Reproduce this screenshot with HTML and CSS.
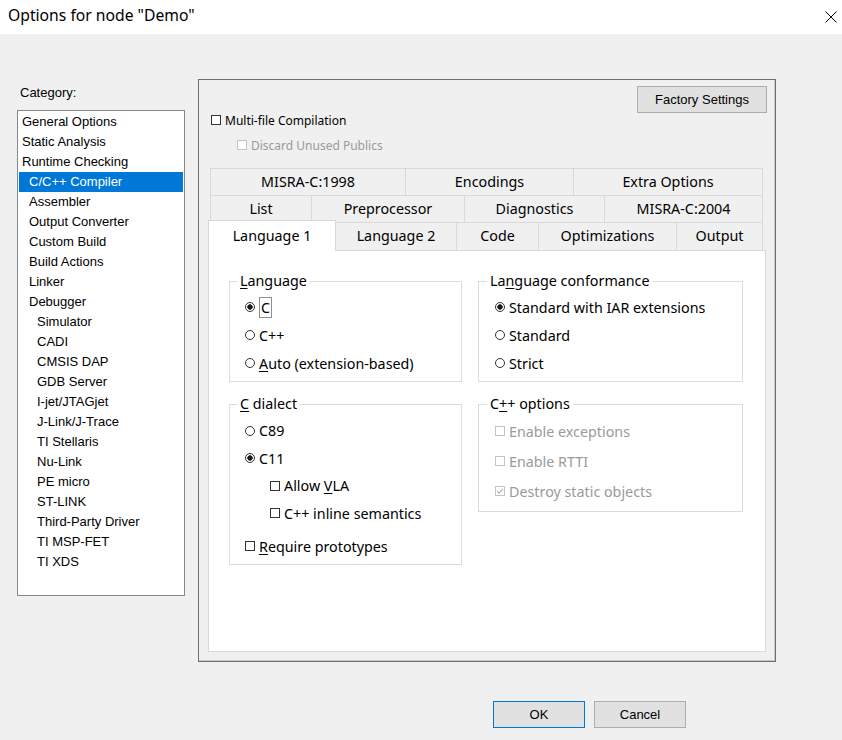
FILE: index.html
```html
<!DOCTYPE html>
<html>
<head>
<meta charset="utf-8">
<title>Options for node "Demo"</title>
<link rel="stylesheet" href="styles.css">
</head>
<body>
<div class="window">
  <header class="titlebar">
    <span class="title">Options for node "Demo"</span>
    <svg class="close" width="12" height="12" viewBox="0 0 12 12"><path d="M0.5 0.5L11.5 11.5M11.5 0.5L0.5 11.5" stroke="#000" stroke-width="1" fill="none"/></svg>
  </header>
  <div class="content">
    <aside class="category">
      <div class="cat-label">Category:</div>
      <ul class="cat-list">
        <li class="l0">General Options</li>
        <li class="l0">Static Analysis</li>
        <li class="l0">Runtime Checking</li>
        <li class="l1 sel">C/C++ Compiler</li>
        <li class="l1">Assembler</li>
        <li class="l1">Output Converter</li>
        <li class="l1">Custom Build</li>
        <li class="l1">Build Actions</li>
        <li class="l1">Linker</li>
        <li class="l1">Debugger</li>
        <li class="l2">Simulator</li>
        <li class="l2">CADI</li>
        <li class="l2">CMSIS DAP</li>
        <li class="l2">GDB Server</li>
        <li class="l2">I-jet/JTAGjet</li>
        <li class="l2">J-Link/J-Trace</li>
        <li class="l2">TI Stellaris</li>
        <li class="l2">Nu-Link</li>
        <li class="l2">PE micro</li>
        <li class="l2">ST-LINK</li>
        <li class="l2">Third-Party Driver</li>
        <li class="l2">TI MSP-FET</li>
        <li class="l2">TI XDS</li>
      </ul>
    </aside>
    <section class="panel">
      <div class="panel-head">
        <div class="opts">
          <div class="opt"><span class="cb"></span>Multi-file Compilation</div>
          <div class="opt sub disabled"><span class="cb"></span>Discard Unused Publics</div>
        </div>
        <button class="btn factory">Factory Settings</button>
      </div>
      <div class="tabs">
        <div class="tab-row">
          <div class="tab w196 first">MISRA-C:1998</div>
          <div class="tab w168">Encodings</div>
          <div class="tab w189">Extra Options</div>
        </div>
        <div class="tab-row">
          <div class="tab w102 first">List</div>
          <div class="tab w153">Preprocessor</div>
          <div class="tab w140">Diagnostics</div>
          <div class="tab w158">MISRA-C:2004</div>
        </div>
        <div class="tab-row last">
          <div class="tab w128 first selected">Language 1</div>
          <div class="tab w121">Language 2</div>
          <div class="tab w82">Code</div>
          <div class="tab w138">Optimizations</div>
          <div class="tab w86">Output</div>
        </div>
        <div class="pane">
          <div class="col col-left">
            <fieldset class="group g-lang">
              <legend><u>L</u>anguage</legend>
              <div class="row r28"><span class="rb on"></span><span class="focus">C</span></div>
              <div class="row r28"><span class="rb"></span>C++</div>
              <div class="row r28"><span class="rb"></span><span><u>A</u>uto (extension-based)</span></div>
            </fieldset>
            <fieldset class="group g-dialect">
              <legend><u>C</u> dialect</legend>
              <div class="row r27"><span class="rb"></span>C89</div>
              <div class="row r27"><span class="rb on"></span>C11</div>
              <div class="row r27 nested"><span class="cb"></span><span>Allow <u>V</u>LA</span></div>
              <div class="row r27 nested"><span class="cb"></span>C++ inline semantics</div>
              <div class="row r27 spaced"><span class="cb"></span><span><u>R</u>equire prototypes</span></div>
            </fieldset>
          </div>
          <div class="col col-right">
            <fieldset class="group g-lang">
              <legend>La<u>n</u>guage conformance</legend>
              <div class="row r28"><span class="rb on"></span>Standard with IAR extensions</div>
              <div class="row r28"><span class="rb"></span>Standard</div>
              <div class="row r28"><span class="rb"></span>Strict</div>
            </fieldset>
            <fieldset class="group g-cpp">
              <legend>C<u>+</u>+ options</legend>
              <div class="row r30 disabled"><span class="cb"></span>Enable exceptions</div>
              <div class="row r30 disabled"><span class="cb"></span>Enable RTTI</div>
              <div class="row r30 disabled"><span class="cb checked"><svg width="8" height="8" viewBox="0 0 8 8"><path d="M1 4.2L3 6.2L7 1.8" stroke="#b4b4b4" stroke-width="1.1" fill="none"/></svg></span>Destroy static objects</div>
            </fieldset>
          </div>
        </div>
      </div>
    </section>
  </div>
  <footer class="footer">
    <button class="btn ok">OK</button>
    <button class="btn">Cancel</button>
  </footer>
</div>
</body>
</html>
```
FILE: styles.css
```css
html, body {
  margin: 0;
  padding: 0;
}
body {
  background: #f0f0f0;
  width: 842px;
  height: 740px;
  overflow: hidden;
  font-family: "Noto Sans", "Liberation Sans", sans-serif;
  color: #000;
}
.window {
  width: 842px;
  height: 740px;
}
.titlebar {
  height: 34px;
  box-sizing: border-box;
  background: #fff;
  display: flex;
  align-items: center;
  justify-content: space-between;
  padding: 0 5px 4px 8px;
}
.title {
  font-size: 15.7px;
  line-height: 20px;
}
.close {
  display: block;
  margin-top: 4px;
}
.content {
  display: flex;
  align-items: flex-start;
  height: 628px;
}
.category {
  margin-left: 17px;
  width: 168px;
  font-family: "Liberation Sans", Arial, sans-serif;
  font-size: 13px;
}
.cat-label {
  padding-top: 51px;
  padding-left: 3px;
  line-height: 16px;
  margin-bottom: 9px;
}
.cat-list {
  list-style: none;
  margin: 0;
  padding: 1px 1px 0;
  height: 486px;
  box-sizing: border-box;
  border: 1px solid #828790;
  background: #fff;
}
.cat-list li {
  height: 20px;
  line-height: 20px;
  white-space: nowrap;
}
.cat-list .l0 { padding-left: 3px; }
.cat-list .l1 { padding-left: 10px; }
.cat-list .l2 { padding-left: 18px; }
.cat-list .sel {
  background: #0078d7;
  color: #fff;
}
.panel {
  margin-left: 13px;
  margin-top: 45px;
  width: 578px;
  height: 583px;
  box-sizing: border-box;
  border: 1px solid #6e6e6e;
  box-shadow: inset -1px -1px 0 #c8c8c8;
  padding: 6px 8px 0 9px;
}
.panel-head {
  display: flex;
  justify-content: space-between;
  align-items: flex-start;
}
.opts {
  padding-top: 24px;
  margin-left: 3px;
  display: flex;
  flex-direction: column;
  gap: 5px;
  font-size: 12px;
}
.opt {
  display: flex;
  align-items: center;
  height: 20px;
}
.opt.sub {
  margin-left: 26px;
}
.btn {
  font-family: "Liberation Sans", Arial, sans-serif;
  font-size: 13px;
  color: #000;
  background: #e1e1e1;
  border: 1px solid #adadad;
  padding: 0;
  margin: 0;
  height: 27px;
  box-sizing: border-box;
}
.factory {
  width: 130px;
}
.tabs {
  margin-top: 13px;
  width: 558px;
}
.tab-row {
  display: flex;
  height: 27px;
  margin-left: 2px;
  width: 553px;
}
.tab-row.last {
  margin-left: 0;
  width: 555px;
  height: 28px;
}
.tab {
  box-sizing: border-box;
  border-top: 1px solid #d9d9d9;
  border-right: 1px solid #d9d9d9;
  background: #f0f0f0;
  text-align: center;
  font-size: 14.3px;
  line-height: 26px;
  white-space: nowrap;
}
.tab.first {
  border-left: 1px solid #d9d9d9;
}
.tab.selected {
  background: #fff;
  margin-top: -2px;
  height: 31px;
  line-height: 29px;
  position: relative;
  z-index: 1;
}
.w196 { width: 196px; }
.w168 { width: 168px; }
.w189 { width: 189px; }
.w102 { width: 102px; }
.w153 { width: 153px; }
.w140 { width: 140px; }
.w158 { width: 158px; }
.w128 { width: 128px; }
.w121 { width: 121px; }
.w82 { width: 82px; }
.w138 { width: 138px; }
.w86 { width: 86px; }
.pane {
  width: 558px;
  height: 402px;
  box-sizing: border-box;
  border: 1px solid #d9d9d9;
  background: #fff;
  display: flex;
  align-items: flex-start;
  gap: 16px;
  padding: 20px 0 0 20px;
  font-size: 14.3px;
}
.col {
  display: flex;
  flex-direction: column;
  gap: 12px;
}
.col-left { width: 233px; }
.col-right { width: 265px; }
.group {
  margin: 0;
  min-width: 0;
  border: 1px solid #dcdcdc;
  padding: 0 0 4px 15px;
}
.col-right .group {
  padding-left: 16px;
}
.group legend {
  margin-left: -8px;
  padding: 0 3px;
  line-height: 20px;
}
.g-lang { padding-top: 2px; }
.g-dialect { padding-top: 3px; }
.g-cpp { padding-top: 2px; padding-bottom: 5px; }
.row {
  display: flex;
  align-items: center;
  white-space: nowrap;
}
.r28 { height: 28px; }
.r27 { height: 27.5px; }
.r30 { height: 30px; }
.row.nested { padding-left: 25px; }
.row.spaced { margin-top: 5.5px; }
.rb {
  display: inline-block;
  width: 10px;
  height: 10px;
  box-sizing: border-box;
  border: 1px solid #333;
  border-radius: 50%;
  background: #fff;
  margin-right: 4px;
  flex: none;
}
.rb.on {
  background: radial-gradient(circle, #1a1a1a 0 2.4px, #fff 3px);
}
.cb {
  display: inline-flex;
  align-items: center;
  justify-content: center;
  width: 10px;
  height: 10px;
  box-sizing: border-box;
  border: 1px solid #333;
  background: #fff;
  margin-right: 4px;
  flex: none;
}
.cb svg { display: block; }
.disabled {
  color: #9a9a9a;
}
.disabled .cb {
  border-color: #c4c4c4;
}
.focus {
  border: 1px solid #8e8e8e;
  padding: 0 1px;
  line-height: 19px;
}
u {
  text-decoration-thickness: 1px;
  text-underline-offset: 2px;
}
.footer {
  display: flex;
  justify-content: flex-end;
  gap: 9px;
  padding-right: 156px;
  margin-top: 39px;
}
.footer .btn {
  width: 92px;
}
.btn.ok {
  border-color: #0078d7;
}
```
